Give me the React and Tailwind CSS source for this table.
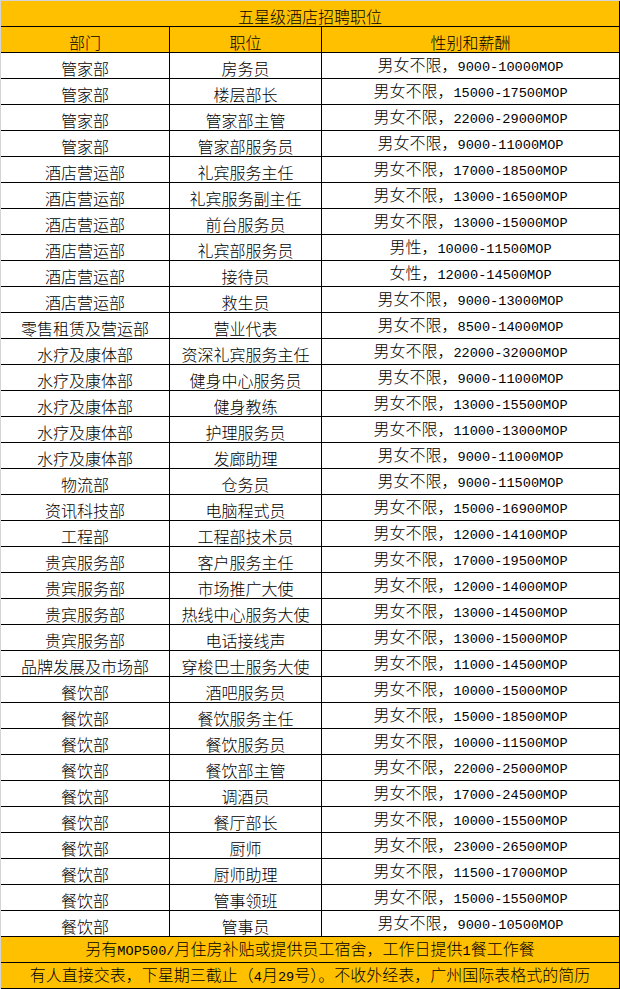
const rows = [
    ["管家部", "房务员", "男女不限，9000-10000MOP"],
    ["管家部", "楼层部长", "男女不限，15000-17500MOP"],
    ["管家部", "管家部主管", "男女不限，22000-29000MOP"],
    ["管家部", "管家部服务员", "男女不限，9000-11000MOP"],
    ["酒店营运部", "礼宾服务主任", "男女不限，17000-18500MOP"],
    ["酒店营运部", "礼宾服务副主任", "男女不限，13000-16500MOP"],
    ["酒店营运部", "前台服务员", "男女不限，13000-15000MOP"],
    ["酒店营运部", "礼宾部服务员", "男性，10000-11500MOP"],
    ["酒店营运部", "接待员", "女性，12000-14500MOP"],
    ["酒店营运部", "救生员", "男女不限，9000-13000MOP"],
    ["零售租赁及营运部", "营业代表", "男女不限，8500-14000MOP"],
    ["水疗及康体部", "资深礼宾服务主任", "男女不限，22000-32000MOP"],
    ["水疗及康体部", "健身中心服务员", "男女不限，9000-11000MOP"],
    ["水疗及康体部", "健身教练", "男女不限，13000-15500MOP"],
    ["水疗及康体部", "护理服务员", "男女不限，11000-13000MOP"],
    ["水疗及康体部", "发廊助理", "男女不限，9000-11000MOP"],
    ["物流部", "仓务员", "男女不限，9000-11500MOP"],
    ["资讯科技部", "电脑程式员", "男女不限，15000-16900MOP"],
    ["工程部", "工程部技术员", "男女不限，12000-14100MOP"],
    ["贵宾服务部", "客户服务主任", "男女不限，17000-19500MOP"],
    ["贵宾服务部", "市场推广大使", "男女不限，12000-14000MOP"],
    ["贵宾服务部", "热线中心服务大使", "男女不限，13000-14500MOP"],
    ["贵宾服务部", "电话接线声", "男女不限，13000-15000MOP"],
    ["品牌发展及市场部", "穿梭巴士服务大使", "男女不限，11000-14500MOP"],
    ["餐饮部", "酒吧服务员", "男女不限，10000-15000MOP"],
    ["餐饮部", "餐饮服务主任", "男女不限，15000-18500MOP"],
    ["餐饮部", "餐饮服务员", "男女不限，10000-11500MOP"],
    ["餐饮部", "餐饮部主管", "男女不限，22000-25000MOP"],
    ["餐饮部", "调酒员", "男女不限，17000-24500MOP"],
    ["餐饮部", "餐厅部长", "男女不限，10000-15500MOP"],
    ["餐饮部", "厨师", "男女不限，23000-26500MOP"],
    ["餐饮部", "厨师助理", "男女不限，11500-17000MOP"],
    ["餐饮部", "管事领班", "男女不限，15000-15500MOP"],
    ["餐饮部", "管事员", "男女不限，9000-10500MOP"],
];

// ascii runs get a half-width mono face, like SimSun does
function Txt({ text }) {
    const parts = text.split(/([\x20-\x7E]+)/).filter(Boolean);
    return (
        <span className="whitespace-nowrap">
            {parts.map((p, i) =>
                /^[\x20-\x7E]+$/.test(p)
                    ? <span key={i} className="font-['Liberation_Mono',monospace] font-normal text-[13.6px]">{p}</span>
                    : <span key={i}>{p}</span>
            )}
        </span>
    );
}

function Cell({ children, bg = "bg-white" }) {
    return (
        <div className={`h-[26px] ${bg} border-r border-b border-black flex items-end justify-center leading-[20px] overflow-visible`}>
            {children}
        </div>
    );
}

function Banner({ text }) {
    return (
        <div className="h-[26px] bg-[#ffc000] border-r border-b border-black flex items-end justify-center leading-[20px] overflow-visible">
            <Txt text={text} />
        </div>
    );
}

export default function App() {
    return (
        <div className="w-[620px] h-[989px] bg-white border-l border-t border-[#d4d4d4] text-black text-[16px] font-light font-['Noto_Sans_CJK_SC',sans-serif] overflow-hidden">
            <Banner text="五星级酒店招聘职位" />
            <div className="grid grid-cols-[169px_152px_298px]">
                <Cell bg="bg-[#ffc000]"><Txt text="部门" /></Cell>
                <Cell bg="bg-[#ffc000]"><Txt text="职位" /></Cell>
                <Cell bg="bg-[#ffc000]"><Txt text="性别和薪酬" /></Cell>
                {rows.map((r, i) => (
                    <>
                        <Cell key={i + "a"}><Txt text={r[0]} /></Cell>
                        <Cell key={i + "b"}><Txt text={r[1]} /></Cell>
                        <Cell key={i + "c"}><Txt text={r[2]} /></Cell>
                    </>
                ))}
            </div>
            <Banner text="另有MOP500/月住房补贴或提供员工宿舍，工作日提供1餐工作餐" />
            <Banner text="有人直接交表，下星期三截止（4月29号）。不收外经表，广州国际表格式的简历" />
        </div>
    );
}
